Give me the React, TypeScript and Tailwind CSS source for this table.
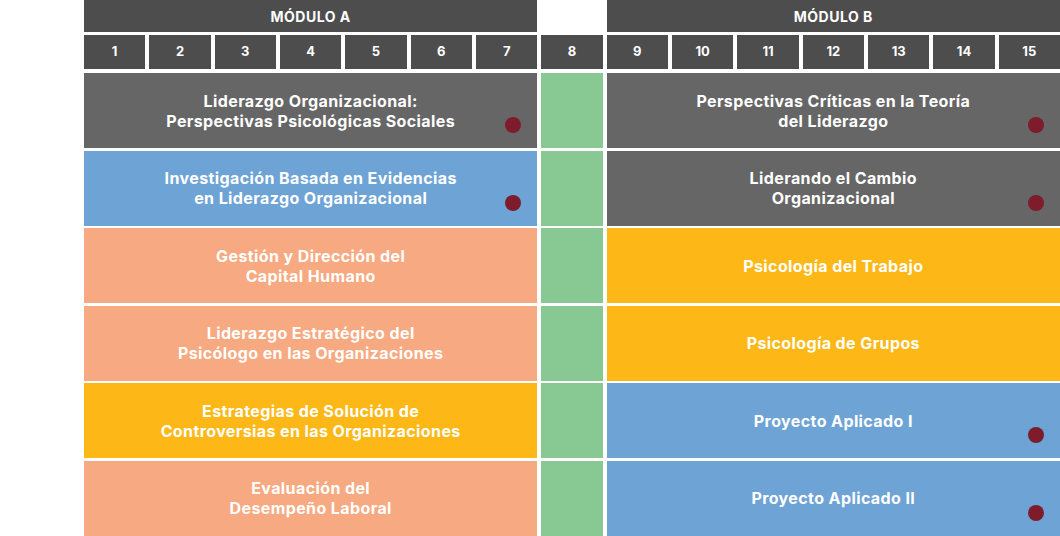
const moduleA = [
  { title: ['Liderazgo Organizacional:', 'Perspectivas Psicológicas Sociales'], color: 'bg-[#666666]', dot: true },
  { title: ['Investigación Basada en Evidencias', 'en Liderazgo Organizacional'], color: 'bg-[#6ea3d6]', dot: true },
  { title: ['Gestión y Dirección del', 'Capital Humano'], color: 'bg-[#f7a981]', dot: false },
  { title: ['Liderazgo Estratégico del', 'Psicólogo en las Organizaciones'], color: 'bg-[#f7a981]', dot: false },
  { title: ['Estrategias de Solución de', 'Controversias en las Organizaciones'], color: 'bg-[#fdb817]', dot: false },
  { title: ['Evaluación del', 'Desempeño Laboral'], color: 'bg-[#f7a981]', dot: false },
]

const moduleB = [
  { title: ['Perspectivas Críticas en la Teoría', 'del Liderazgo'], color: 'bg-[#666666]', dot: true },
  { title: ['Liderando el Cambio', 'Organizacional'], color: 'bg-[#666666]', dot: true },
  { title: ['Psicología del Trabajo'], color: 'bg-[#fdb817]', dot: false },
  { title: ['Psicología de Grupos'], color: 'bg-[#fdb817]', dot: false },
  { title: ['Proyecto Aplicado I'], color: 'bg-[#6ea3d6]', dot: true },
  { title: ['Proyecto Aplicado II'], color: 'bg-[#6ea3d6]', dot: true },
]

type Course = { title: string[]; color: string; dot: boolean }

function CourseCell({ course }: { course: Course }) {
  return (
    <div className={`relative flex flex-col items-center justify-center text-center ${course.color}`}>
      {course.title.map((line) => (
        <span key={line} className="text-[16px] leading-[20px] font-bold tracking-[0.4px] text-white">
          {line}
        </span>
      ))}
      {course.dot && (
        <span className="absolute right-[16px] bottom-[15px] w-4 h-4 rounded-full bg-[#7e1c2c]" />
      )}
    </div>
  )
}

function App() {
  const numbers = Array.from({ length: 15 }, (_, i) => i + 1)

  return (
    <div
      className="w-[1060px] h-[536px] bg-white overflow-hidden pl-[84px]"
      style={{ fontFamily: 'Inter, "Open Sans", sans-serif' }}
    >
      <div className="grid grid-cols-15 gap-x-[4px]">
        {/* Module headers */}
        <div className="col-span-7 h-[32px] bg-[#4d4d4d] flex items-center justify-center text-white text-[14px] font-bold tracking-[0.5px]">
          MÓDULO A
        </div>
        <div className="h-[32px]" />
        <div className="col-span-7 h-[32px] bg-[#4d4d4d] flex items-center justify-center text-white text-[14px] font-bold tracking-[0.5px]">
          MÓDULO B
        </div>

        {/* Week numbers */}
        {numbers.map((n) => (
          <div
            key={n}
            className="mt-[3px] h-[34px] bg-[#4d4d4d] flex items-center justify-center text-white text-[13px] font-bold"
          >
            {n}
          </div>
        ))}
      </div>

      {/* Courses */}
      <div className="mt-[4px] h-[463px] grid grid-cols-15 grid-rows-6 gap-x-[4px] gap-y-[2.6px]">
        {moduleA.map((c, i) => (
          <div key={'a' + i} className="col-start-1 col-span-7 grid" style={{ gridRowStart: i + 1 }}>
            <CourseCell course={c} />
          </div>
        ))}
        {moduleA.map((_, i) => (
          <div key={'g' + i} className="col-start-8 bg-[#88c892]" style={{ gridRowStart: i + 1 }} />
        ))}
        {moduleB.map((c, i) => (
          <div key={'b' + i} className="col-start-9 col-span-7 grid" style={{ gridRowStart: i + 1 }}>
            <CourseCell course={c} />
          </div>
        ))}
      </div>
    </div>
  )
}

export default App
